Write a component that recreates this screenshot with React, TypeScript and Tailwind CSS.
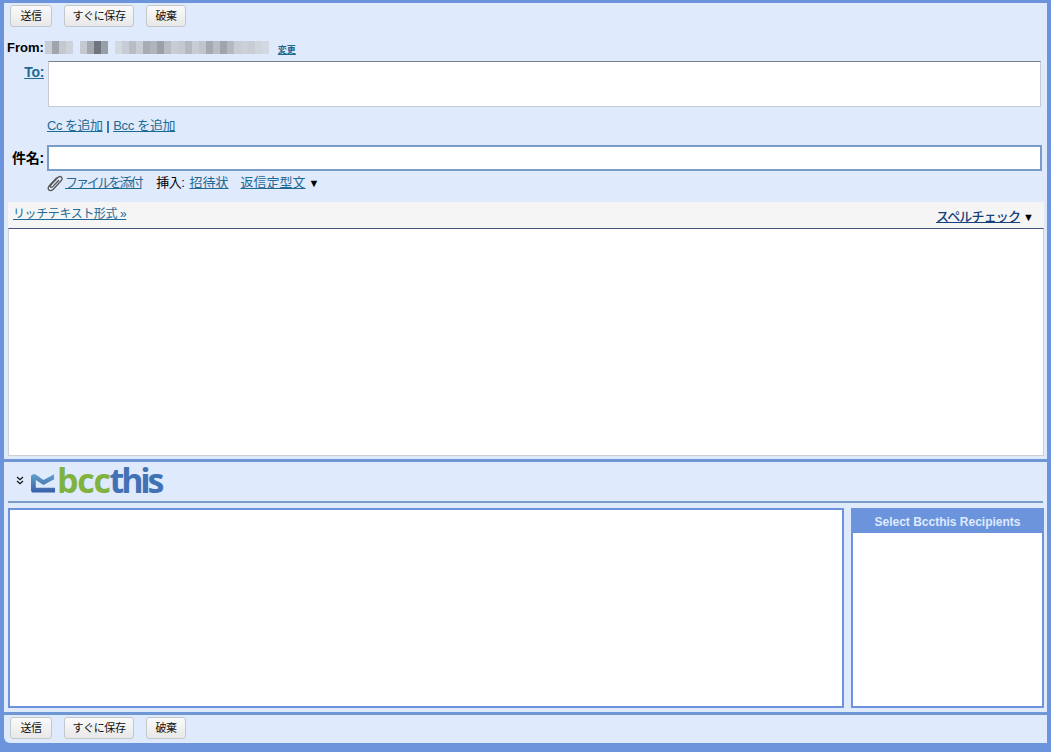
const jp = '"Liberation Sans", "Noto Sans CJK JP", sans-serif';

function Btn({ children, w }: { children: React.ReactNode; w: string }) {
  return (
    <button
      className={`${w} h-[22px] rounded-[3px] border border-[#c4c8cc] bg-gradient-to-b from-[#fafafa] to-[#e8e8e8] text-[11px] text-[#111] leading-none flex items-center justify-center tracking-[-0.4px]`}
    >
      {children}
    </button>
  );
}

function Buttons() {
  return (
    <div className="flex gap-3 pl-[10px]">
      <Btn w="w-[42px]">送信</Btn>
      <Btn w="w-[70px]">すぐに保存</Btn>
      <Btn w="w-[40px]">破棄</Btn>
    </div>
  );
}

function L({ children, cls = "" }: { children: React.ReactNode; cls?: string }) {
  return <a className={`underline text-[#1f6a94] ${cls}`}>{children}</a>;
}

const g1 = ["#c8ccd4", "#a0a4ac", "#c4c8d0", "#ced2da"];
const g2 = ["#c4c8d0", "#a4a8b0", "#70747c", "#9a9ea8"];
const g3 = [
  "#d4d8e0", "#c8ccd4", "#b8bcc4", "#c8ccd4", "#a8acb4", "#b0b4bc", "#9ca0a8", "#b8bcc4", "#c8ccd4", "#c4c8d0", "#b4b8c0",
  "#c8ccd4", "#c0c4cc", "#a4a8b0", "#b8bcc4", "#a0a4ac", "#b4b8c0", "#c8ccd4", "#ccd0d8", "#c8ccd4", "#d0d4dc", "#d4d8e0",
];

function Blur({ colors, cls = "" }: { colors: string[]; cls?: string }) {
  return (
    <span className={`flex h-[13px] ${cls}`}>
      {colors.map((c, i) => (
        <span key={i} className="h-full w-[7px] block" style={{ background: c }} />
      ))}
    </span>
  );
}

export default function App() {
  return (
    <div
      className="w-[1051px] h-[752px] bg-[#6b94dd] overflow-hidden pt-[3px] pl-[4px] pr-[4px] pb-[9px] text-[13px] text-black"
      style={{ fontFamily: jp }}
    >
      <div className="w-full h-full bg-[#dfeafd] rounded-bl-[6px] flex flex-col">
        {/* top toolbar */}
        <div className="h-[29px] pt-[2px] -ml-[4px]">
          <Buttons />
        </div>

        {/* From */}
        <div className="h-[27px] flex items-center pl-[3px] pt-[3px]">
          <span className="font-bold text-[13px] leading-none">From:</span>
          <Blur colors={g1} cls="ml-[1px]" />
          <Blur colors={g2} cls="ml-[7px]" />
          <Blur colors={g3} cls="ml-[7px]" />
          <L cls="ml-[9px] text-[9px] font-bold leading-none mt-[6px]">変更</L>
        </div>

        {/* To */}
        <div className="flex h-[46px] mt-[2px]">
          <div className="w-[40px] text-right pt-[3px] leading-[16px] text-[14px]">
            <L cls="font-bold tracking-[-0.3px]">To:</L>
          </div>
          <div className="ml-[4px] w-[993px] h-[46px] bg-white border border-[#c6cbd3] border-t-[#7b8088]" />
        </div>

        {/* Cc Bcc */}
        <div className="h-[38px] pl-[43px] pt-[10px] leading-[18px] text-[13px]">
          <L cls="tracking-[-0.5px]">Cc を追加</L> | <L cls="tracking-[-0.3px]">Bcc を追加</L>
        </div>

        {/* Subject */}
        <div className="flex h-[26px] items-center">
          <span className="w-[40px] text-right font-bold text-[14px] tracking-[-0.2px]">件名:</span>
          <div className="ml-[3px] w-[995px] h-[26px] bg-white border-2 border-[#7a9cc6]" />
        </div>

        {/* Attach */}
        <div className="h-[31px] flex items-start pl-[43px] pt-[3px] leading-[18px]">
          <svg width="16" height="17" viewBox="0 0 16 17" fill="none" stroke="#555" strokeWidth="1.3" className="mr-[2px] mt-[1px]">
            <path d="M10 2.500 2.500 10.500c-1.500 1.700-1.500 3.500-.5 4.500 1 1 2.800.8 4.300-.8l7.600-8.200c1.400-1.500 1.400-3 .5-3.900-1-.9-2.500-.8-3.900.7L4 9.800c-.8.9-.8 1.700-.3 2.200.5.500 1.300.4 2.100-.4L12 5" />
          </svg>
          <L cls="tracking-[-2.1px]">ファイルを添付</L>
          <span className="ml-[15px] tracking-[-0.5px]">挿入: </span>
          <L cls="ml-[5px]">招待状</L>
          <L cls="ml-[12px]">返信定型文</L>
          <span className="ml-[3px] text-[11px] leading-[18px]">▼</span>
        </div>

        {/* Editor */}
        <div className="ml-[4px] w-[1036px] h-[254px] flex flex-col">
          <div className="h-[26px] bg-[#f5f5f5] flex justify-between items-start">
            <a className="underline text-[#1f6a94] text-[12px] pl-[5px] pt-[4px] leading-[16px] tracking-[-0.4px]">リッチテキスト形式 »</a>
            <span className="pt-[6px] pr-[10px] leading-[18px] text-[13px] flex items-start">
              <a className="underline text-[#15407a] font-medium tracking-[-0.85px]">スペルチェック</a>
              <span className="ml-[3px] text-[11px] leading-[18px]">▼</span>
            </span>
          </div>
          <div className="flex-1 bg-white border border-[#ccd0d6] border-t-[#44547a]" />
        </div>

        {/* Bcc panel */}
        <div className="h-[3px] mt-[3px] bg-[#6f97d6]" />
        <div className="h-[39px] flex items-center pl-[12px]">
          <svg width="8" height="9" viewBox="0 0 8 9" fill="none" stroke="#111" strokeWidth="1.2" className="mt-[-3px]">
            <path d="M1 1 4 3.800 7 1M1 5 4 7.800 7 5" />
          </svg>
          <svg width="25" height="25" viewBox="0 0 26 25" className="ml-[7px] mt-[2px]">
            <defs>
              <linearGradient id="env" x1="0" y1="0" x2="0" y2="1">
                <stop offset="0" stopColor="#62a0cc" />
                <stop offset="1" stopColor="#3a5fa8" />
              </linearGradient>
            </defs>
            <path d="M0 7a3 3 0 0 1 3-3h1.500l8.500 6 11-6v5L13 15 5 10v8h20v5H3a3 3 0 0 1-3-3z" fill="url(#env)" />
          </svg>
          <span
            className="font-bold text-[34px] leading-none -mt-[3px] ml-[1px]"
            style={{ fontFamily: '"Open Sans", "DejaVu Sans", sans-serif' }}
          >
            <span className="text-[#7fb23e] tracking-[-1.3px]">bcc</span>
            <span className="text-[#4272b4] tracking-[-3.2px]">this</span>
          </span>
        </div>
        <div className="ml-[4px] w-[1035px] h-[2px] bg-[#7a9cc6]" />

        <div className="ml-[4px] mt-[5px] flex h-[200px] gap-[7px]">
          <div className="w-[836px] h-full bg-white border-2 border-[#6b94dd]" />
          <div className="w-[193px] h-full bg-white border-2 border-[#6b94dd] flex flex-col">
            <div className="h-[23px] bg-[#6b94dd] text-[#dfeafd] text-[12px] font-bold flex items-center justify-center">
              Select Bccthis Recipients
            </div>
          </div>
        </div>

        <div className="h-[3px] mt-[4px] bg-[#6f97d6]" />
        <div className="pt-[2px] -ml-[4px]">
          <Buttons />
        </div>
      </div>
    </div>
  );
}
